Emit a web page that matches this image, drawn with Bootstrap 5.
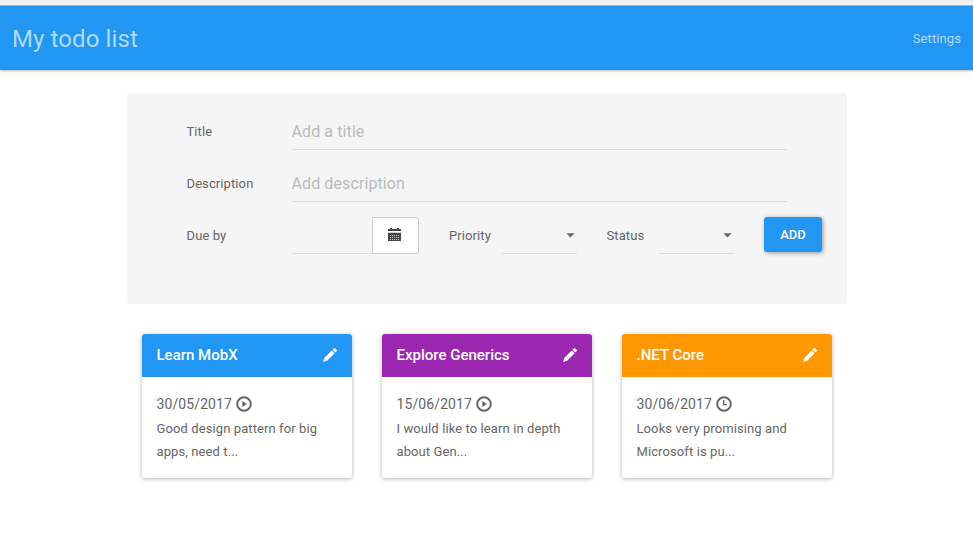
<!DOCTYPE html>
<html lang="en">
<head>
<meta charset="utf-8">
<meta name="viewport" content="width=device-width, initial-scale=1">
<title>My todo list</title>
<link href="https://cdn.jsdelivr.net/npm/bootstrap@5.3.0/dist/css/bootstrap.min.css" rel="stylesheet">
<style>
body { font: 13px/23px Roboto, "Liberation Sans", sans-serif; letter-spacing: .1px; color: #666; background: #fff; }
.top-strip { height: 6px; background: #f1f1f1; border-bottom: 1px solid #b5b3b5; }
.main-bar { height: 64px; padding: 0 12px; background: #2196f3; box-shadow: 0 1px 2px rgba(0,0,0,.3); }
.main-bar .navbar-brand { height: 64px; font-size: 24px; line-height: 66px; color: #b2dbfb; letter-spacing: .1px; }
.main-bar .nav-link { font-size: 13px; color: #b2dbfb; }
.page { width: 720px; }
.todo-form { height: 211px; margin-top: 23px; padding: 20px 60px 0; background: #f5f5f5; border-radius: 3px; }
.form-line { height: 37px; margin-bottom: 15px; }
.form-line label { line-height: 37px; padding-top: 0; }
.first-label { width: 105px; }
.line-input { height: 37px; padding: 0; border: 0; border-radius: 0; background: transparent; box-shadow: inset 0 -1px 0 #ddd; font-size: 16px; color: #666; letter-spacing: .1px; }
.line-input::placeholder { color: #bbb; opacity: 1; }
.date-input { width: 80px; }
.date-btn { width: 47px; height: 37px; padding: 0 2px 2px 0; background: #fff; border: 1px solid #ccc; border-radius: 0 3px 3px 0; color: #444; }
.line-select { width: 75px; padding: 0 2px 1px 0; }
.priority-label { width: 52.5px; margin-left: 30.5px; }
.status-label { width: 52.5px; margin-left: 30px; }
.add-btn { width: 58px; height: 35px; margin-left: 30px; padding: 0; font-size: 13px; font-weight: 500; letter-spacing: 0; color: #fff; background: #2196f3; border: 0; border-radius: 3px; box-shadow: 1px 1px 4px rgba(0,0,0,.4); }
.todo-list { gap: 30px; padding: 30px 15px 0; }
.todo-card { width: 210px; height: 144px; border: 0; border-radius: 3px; box-shadow: 0 1px 4px rgba(0,0,0,.3); color: #666; }
.todo-card .card-header { height: 43px; padding: 0 15px 1px; border: 0; border-radius: 3px 3px 0 0; color: #fff; font-size: 15px; font-weight: 500; letter-spacing: 0; }
.todo-card .card-body { padding: 15px; }
.todo-date { height: 25px; padding-bottom: 1px; font-size: 14px; line-height: 24px; gap: 3.5px; }
.bg-started { background: #2196f3; }
.bg-learning { background: #9c27b0; }
.bg-waiting { background: #ff9800; }
</style>
<script src="https://cdn.jsdelivr.net/npm/bootstrap@5.3.0/dist/js/bootstrap.bundle.min.js"></script>
</head>
<body class="min-vh-100">
<svg class="d-none">
  <symbol id="pencil" viewBox="0 0 14 14"><path fill="currentColor" d="M10.7.4a1.1 1.1 0 0 1 1.5 0l1.4 1.4a1.1 1.1 0 0 1 0 1.5l-1.3 1.3-2.9-2.9zM8.7 2.4l2.9 2.9-7.5 7.4L0 14l1.3-4.1zM1.9 11.3l-.4 1.2 1.2-.4z" fill-rule="evenodd"/></symbol>
  <symbol id="play" viewBox="0 0 16 16"><circle cx="8" cy="8" r="6.8" fill="none" stroke="currentColor" stroke-width="2"/><path fill="currentColor" d="M6.3 4.9v6.2L11 8z"/></symbol>
  <symbol id="clock" viewBox="0 0 16 16"><circle cx="8" cy="8" r="6.8" fill="none" stroke="currentColor" stroke-width="2"/><path fill="none" stroke="currentColor" stroke-width="1.4" d="M7.7 4v4.6h3.2"/></symbol>
</svg>
<div class="top-strip"></div>
<nav class="main-bar navbar position-relative d-flex align-items-center justify-content-between">
  <a class="navbar-brand p-0 m-0" href="#">My todo list</a>
  <a class="nav-link p-0" href="#">Settings</a>
</nav>
<main class="page mx-auto">
  <form class="todo-form">
    <div class="form-line d-flex">
      <label class="first-label flex-shrink-0" for="title">Title</label>
      <input id="title" class="form-control line-input" placeholder="Add a title">
    </div>
    <div class="form-line d-flex">
      <label class="first-label flex-shrink-0" for="desc">Description</label>
      <input id="desc" class="form-control line-input" placeholder="Add description">
    </div>
    <div class="form-line d-flex">
      <label class="first-label flex-shrink-0" for="due">Due by</label>
      <input id="due" class="form-control line-input date-input flex-shrink-0">
      <button type="button" class="btn date-btn flex-shrink-0 d-flex align-items-center justify-content-center" aria-label="Pick a date">
        <svg width="13" height="13" viewBox="0 0 13 13" fill="currentColor" shape-rendering="crispEdges"><path d="M2 0h2v1h5V0h2v1h2v2H0V1h2zM0 4h13v9H0z"/><path fill="#fff" fill-opacity=".8" d="M0 4h13v1H0z"/><path fill="#c8c8c8" d="M2 7h1v1H2zm2 0h1v1H4zm2 0h1v1H6zm2 0h1v1H8zm2 0h1v1h-1zM2 9h1v1H2zm2 0h1v1H4zm2 0h1v1H6zm2 0h1v1H8zm2 0h1v1h-1zM2 11h1v1H2zm2 0h1v1H4zm2 0h1v1H6zm2 0h1v1H8zm2 0h1v1h-1z"/></svg>
      </button>
      <span class="priority-label flex-shrink-0 lh-1 d-flex align-items-center">Priority</span>
      <div class="line-input line-select flex-shrink-0 d-flex align-items-center justify-content-end" role="combobox" aria-label="Priority"><svg width="9" height="5" viewBox="0 0 9 5"><path fill="#666" d="M.4.2h8.2L4.5 4.6z"/></svg></div>
      <span class="status-label flex-shrink-0 lh-1 d-flex align-items-center">Status</span>
      <div class="line-input line-select flex-shrink-0 d-flex align-items-center justify-content-end" role="combobox" aria-label="Status"><svg width="9" height="5" viewBox="0 0 9 5"><path fill="#666" d="M.4.2h8.2L4.5 4.6z"/></svg></div>
      <button type="button" class="btn add-btn flex-shrink-0">ADD</button>
    </div>
  </form>
  <section class="todo-list d-flex">
    <article class="card todo-card">
      <div class="card-header bg-started d-flex align-items-center justify-content-between"><span>Learn MobX</span><svg width="14" height="14"><use href="#pencil"/></svg></div>
      <div class="card-body"><div class="todo-date d-flex align-items-center">30/05/2017 <svg width="16" height="16"><use href="#play"/></svg></div><p class="m-0">Good design pattern for big apps, need t...</p></div>
    </article>
    <article class="card todo-card">
      <div class="card-header bg-learning d-flex align-items-center justify-content-between"><span>Explore Generics</span><svg width="14" height="14"><use href="#pencil"/></svg></div>
      <div class="card-body"><div class="todo-date d-flex align-items-center">15/06/2017 <svg width="16" height="16"><use href="#play"/></svg></div><p class="m-0">I would like to learn in depth about Gen...</p></div>
    </article>
    <article class="card todo-card">
      <div class="card-header bg-waiting d-flex align-items-center justify-content-between"><span>.NET Core</span><svg width="14" height="14"><use href="#pencil"/></svg></div>
      <div class="card-body"><div class="todo-date d-flex align-items-center">30/06/2017 <svg width="16" height="16"><use href="#clock"/></svg></div><p class="m-0">Looks very promising and Microsoft is pu...</p></div>
    </article>
  </section>
</main>
</body>
</html>
